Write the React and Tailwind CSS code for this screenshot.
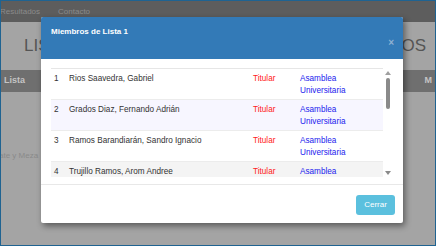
import React from "react";

const miembros = [
  { n: 1, nombre: "Rios Saavedra, Gabriel", cargo: "Titular", organo: "Asamblea Universitaria", bg: "bg-white" },
  { n: 2, nombre: "Grados Diaz, Fernando Adrián", cargo: "Titular", organo: "Asamblea Universitaria", bg: "bg-[#f7f6ff]" },
  { n: 3, nombre: "Ramos Barandiarán, Sandro Ignacio", cargo: "Titular", organo: "Asamblea Universitaria", bg: "bg-white" },
  { n: 4, nombre: "Trujillo Ramos, Arom Andree", cargo: "Titular", organo: "Asamblea Universitaria", bg: "bg-[#f4f4f4]" },
];

const FondoPagina = () => (
  <div className="flex flex-col h-full">
    <div className="h-[21px] bg-[#5d5d5d] flex items-center gap-[18px] text-[8px] text-[#8b8b8b] -ml-[1px]">
      <span>Resultados</span>
      <span>Contacto</span>
    </div>
    <div className="h-[48px] flex items-center justify-between pl-[23px] pr-[9px] text-[17px] text-[#555555]">
      <span>LISTAS</span>
      <span>ÓRGANOS</span>
    </div>
    <div className="h-[22px] bg-[#6f6f6f] flex items-center justify-between px-[3px] text-[9px] font-bold text-[#c4c4c4]">
      <span>Lista</span>
      <span>M</span>
    </div>
    <div className="mt-[58px] -ml-[2px] text-[8px] text-[#8a8a8a]">ate y Meza</div>
  </div>
);

const Scrollbar = () => (
  <div className="w-[10px] flex flex-col items-center pt-[3px] pb-[2px]">
    <div className="w-0 h-0 border-x-[3px] border-x-transparent border-b-[4px] border-b-[#a0a0a0]" />
    <div className="mt-[3px] w-[4px] h-[31px] rounded-full bg-[#8a8a8a]" />
    <div className="flex-1" />
    <div className="w-0 h-0 border-x-[3px] border-x-transparent border-t-[4px] border-t-[#8a8a8a]" />
  </div>
);

export default function App() {
  return (
    <div className="w-[436px] h-[246px] relative overflow-hidden border border-[#1f6391] bg-[#a4a4a4] font-['Liberation_Sans',Arial,sans-serif]">
      <FondoPagina />

      <div className="absolute left-[40px] top-[16px] w-[362px] h-[206px] bg-white rounded-[2px] shadow-[2px_3px_6px_rgba(0,0,0,0.45)] flex flex-col overflow-hidden">
        <div className="h-[42px] bg-[#337ab7] relative px-[10px] pt-[9px]">
          <h4 className="text-[8px] text-white font-semibold leading-[12px]">Miembros de Lista 1</h4>
          <span className="absolute right-[9px] top-[21px] text-[10px] font-bold text-[#8fb1d2] leading-none">×</span>
        </div>

        <div className="px-[10px] pt-[9px] h-[126px] border-b border-[#e8e8e8]">
          <div className="flex h-[109px]">
            <div className="flex-1 overflow-hidden border-t border-[#e6e6e6]">
              {miembros.map((m) => (
                <div
                  key={m.n}
                  className={`flex h-[31px] border-b border-[#ececec] pt-[4px] text-[8.2px] leading-[12px] ${m.bg}`}
                >
                  <span className="w-[18px] pl-[3px] text-[#333]">{m.n}</span>
                  <span className="w-[184px] text-[#333]">{m.nombre}</span>
                  <span className="w-[47px] text-[#ff2020]">{m.cargo}</span>
                  <span className="w-[60px] text-[#2222ee]">{m.organo}</span>
                </div>
              ))}
            </div>
            <Scrollbar />
          </div>
        </div>

        <div className="flex justify-end px-[8px] pt-[10px]">
          <button className="w-[39px] h-[20px] rounded-[3px] bg-[#5bc0de] text-white text-[8px]">
            Cerrar
          </button>
        </div>
      </div>
    </div>
  );
}
